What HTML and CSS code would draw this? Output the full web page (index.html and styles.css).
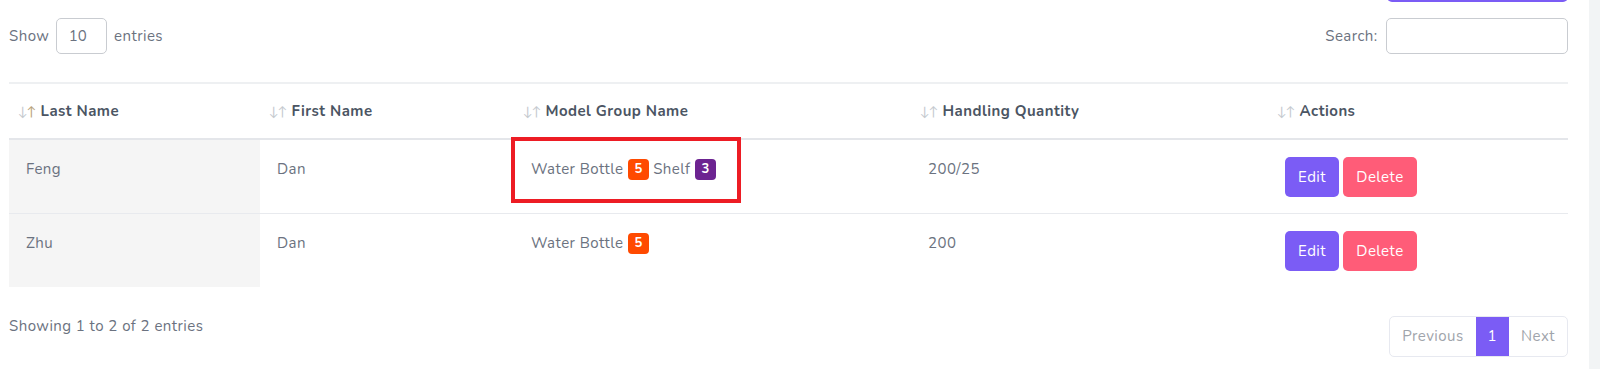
FILE: index.html
```html
<!DOCTYPE html>
<html lang="en">
<head>
  <meta charset="UTF-8" />
  <meta name="viewport" content="width=device-width, initial-scale=1.0" />
  <title>Handlers</title>
  <link rel="stylesheet" href="styles.css">
</head>
<body>
  <div class="card">
    <div class="top-actions">
      <button class="btn btn-primary add-button" aria-label="Add Handler"></button>
    </div>

    <div class="controls">
      <label class="length">Show <input class="length-input" type="text" value="10"> entries</label>
      <label class="search">Search: <input class="search-input" type="text"></label>
    </div>

    <table class="data-table">
      <colgroup>
        <col class="col-last">
        <col class="col-first">
        <col class="col-model">
        <col class="col-qty">
        <col>
      </colgroup>
      <thead>
        <tr>
          <th><span class="sort sorted"><span class="down">↓</span><span class="up">↑</span></span>Last Name</th>
          <th><span class="sort"><span class="down">↓</span><span class="up">↑</span></span>First Name</th>
          <th><span class="sort"><span class="down">↓</span><span class="up">↑</span></span>Model Group Name</th>
          <th><span class="sort"><span class="down">↓</span><span class="up">↑</span></span>Handling Quantity</th>
          <th><span class="sort"><span class="down">↓</span><span class="up">↑</span></span>Actions</th>
        </tr>
      </thead>
      <tbody>
        <tr>
          <td class="sorting-col">Feng</td>
          <td>Dan</td>
          <td class="model-cell">
            Water Bottle <span class="badge badge-orange">5</span> Shelf <span class="badge badge-purple">3</span>
            <div class="highlight-box"></div>
          </td>
          <td>200/25</td>
          <td><button class="btn btn-primary">Edit</button> <button class="btn btn-danger">Delete</button></td>
        </tr>
        <tr>
          <td class="sorting-col">Zhu</td>
          <td>Dan</td>
          <td>Water Bottle <span class="badge badge-orange">5</span></td>
          <td>200</td>
          <td><button class="btn btn-primary">Edit</button> <button class="btn btn-danger">Delete</button></td>
        </tr>
      </tbody>
    </table>

    <div class="table-footer">
      <div class="info">Showing 1 to 2 of 2 entries</div>
      <div class="pagination">
        <a class="page-link disabled">Previous</a>
        <a class="page-link active">1</a>
        <a class="page-link disabled">Next</a>
      </div>
    </div>
  </div>
</body>
</html>
```

FILE: styles.css
```css
:root {
  --text: #6b7280;
  --heading: #4b5563;
  --border: #e8eaee;
  --primary: #7b5cf5;
  --danger: #ff5c78;
}

body {
  margin: 0;
  background-color: #f2f4f5;
  font-family: "Nunito", "Lato", sans-serif;
  font-size: 15px;
  letter-spacing: 0.45px;
  color: var(--text);
  overflow: hidden;
}

.card {
  background: #ffffff;
  margin-right: 11px;
  padding: 0 21px 0 9px;
  height: 369px;
}

.top-actions {
  display: flex;
  justify-content: flex-end;
}

.add-button {
  width: 181px;
  margin-top: -38px;
}

.controls {
  display: flex;
  justify-content: space-between;
  align-items: center;
  margin-top: 16px;
}

.controls input {
  box-sizing: border-box;
  height: 36px;
  border: 1px solid #c9ccd1;
  border-radius: 5px;
  font: inherit;
  color: var(--text);
  padding: 0 12px;
}

.length-input {
  width: 51px;
  margin: 0 3px 0 2px;
}

.search-input {
  width: 182px;
  margin-left: 4px;
}

.data-table {
  width: 100%;
  border-collapse: collapse;
  table-layout: fixed;
  margin-top: 28px;
}

.col-last { width: 251px; }
.col-first { width: 254px; }
.col-model { width: 397px; }
.col-qty { width: 357px; }

.data-table th {
  height: 24px;
  text-align: left;
  font-weight: 700;
  color: var(--heading);
  padding: 15px 9px;
  line-height: 24px;
  border-top: 2px solid #eef0f2;
  border-bottom: 2px solid #e4e6ea;
}

.sort {
  font-size: 13px;
  line-height: 1;
  font-weight: 400;
  color: #c5c9cf;
  margin-right: 4px;
  letter-spacing: 0;
}

.sort .up {
  margin-left: -1px;
}

.sorted .up {
  color: #b8a27a;
}

.data-table td {
  vertical-align: top;
  padding: 17px 17px 16px;
  line-height: 24px;
  border-bottom: 1px solid var(--border);
}

.data-table tbody tr:last-child td {
  border-bottom: none;
}

.data-table td.sorting-col {
  background-color: #f5f5f5;
}

.model-cell {
  position: relative;
}

.highlight-box {
  position: absolute;
  left: -3px;
  top: -3px;
  width: 230px;
  height: 66px;
  box-sizing: border-box;
  border: 4px solid #ed1c24;
}

.badge {
  display: inline-block;
  min-width: 21px;
  height: 21px;
  line-height: 21px;
  box-sizing: border-box;
  text-align: center;
  border-radius: 4px;
  color: #ffffff;
  font-size: 13px;
  font-weight: 700;
  letter-spacing: 0;
  vertical-align: 1px;
}

.badge-orange { background-color: #ff4a00; }
.badge-purple { background-color: #6c2391; }

.btn {
  height: 40px;
  padding: 0 13px;
  border: none;
  border-radius: 5px;
  font: inherit;
  letter-spacing: 0.45px;
  color: #ffffff;
  cursor: pointer;
  vertical-align: top;
}

.btn-primary { background-color: var(--primary); }
.btn-danger { background-color: var(--danger); }

.table-footer {
  display: flex;
  justify-content: space-between;
  align-items: flex-start;
  margin-top: 29px;
}

.info {
  line-height: 20px;
}

.pagination {
  display: flex;
  border: 1px solid #e7e9f0;
  border-radius: 5px;
  overflow: hidden;
}

.page-link {
  display: block;
  height: 39px;
  line-height: 39px;
  padding: 0 12px;
  color: #a0a4ab;
}

.page-link.active {
  background-color: var(--primary);
  color: #ffffff;
}
```
